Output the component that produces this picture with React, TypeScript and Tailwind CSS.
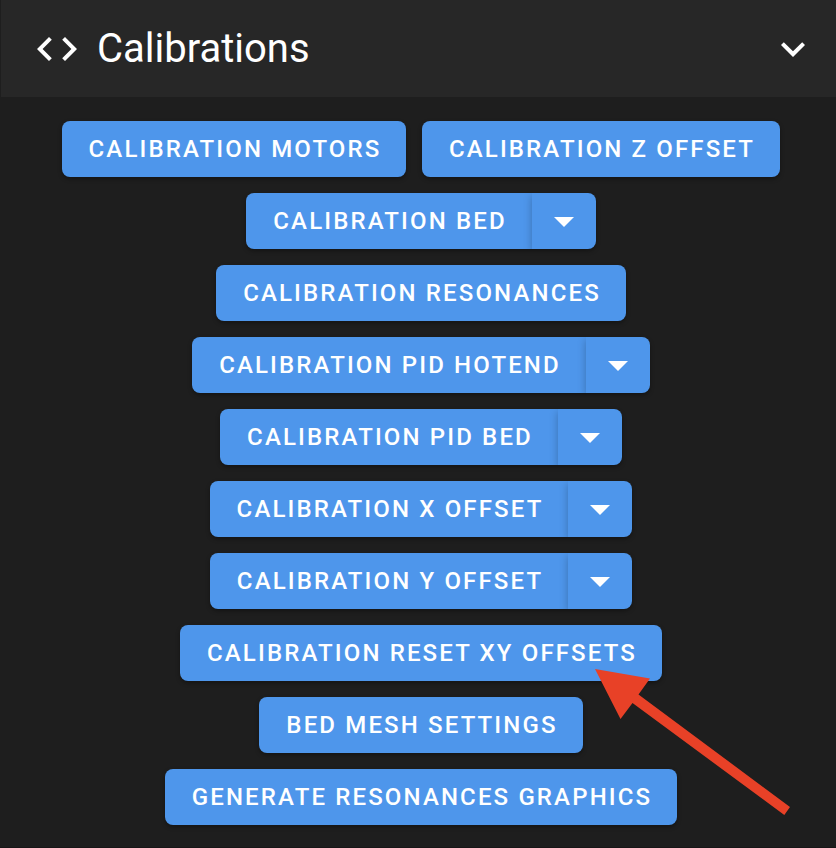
import React from "react";

type Item = { label: string; width: string; menu?: boolean };

const rows: Item[][] = [
  [
    { label: "Calibration Motors", width: "w-[344px]" },
    { label: "Calibration Z Offset", width: "w-[358px]" },
  ],
  [{ label: "Calibration Bed", width: "w-[286px]", menu: true }],
  [{ label: "Calibration Resonances", width: "w-[410px]" }],
  [{ label: "Calibration PID Hotend", width: "w-[394px]", menu: true }],
  [{ label: "Calibration PID Bed", width: "w-[338px]", menu: true }],
  [{ label: "Calibration X Offset", width: "w-[358px]", menu: true }],
  [{ label: "Calibration Y Offset", width: "w-[358px]", menu: true }],
  [{ label: "Calibration Reset XY Offsets", width: "w-[482px]" }],
  [{ label: "Bed Mesh Settings", width: "w-[324px]" }],
  [{ label: "Generate Resonances Graphics", width: "w-[512px]" }],
];

function MacroButton({ label, width, menu }: Item) {
  return (
    <div className="flex h-14 overflow-hidden rounded-lg bg-[#4e96eb] shadow-[0_2px_4px_rgba(0,0,0,0.35)]">
      <button
        className={`${width} h-14 whitespace-nowrap pl-[2px] text-center text-[24px] font-medium uppercase leading-14 tracking-[2.14px]`}
      >
        {label}
      </button>
      {menu && (
        <button className="flex h-14 w-16 items-center justify-center shadow-[0_3px_8px_rgba(0,0,0,0.25)]">
          <svg width="48" height="48" viewBox="0 0 24 24" fill="currentColor">
            <path d="M7 10l5 5 5-5z" />
          </svg>
        </button>
      )}
    </div>
  );
}

export default function App() {
  return (
    <main className="relative h-[848px] w-[836px] overflow-hidden border-b border-[#181617] bg-[#1e1e1e] font-['Roboto',sans-serif] text-white antialiased">
      <header className="flex h-[97px] items-center border-l border-[#1e1e1e] bg-[#272727] pl-8 pr-[19px]">
        <svg width="48" height="48" viewBox="0 0 24 24" fill="currentColor">
          <path d="M14.6 16.6l4.6-4.6-4.6-4.6L16 6l6 6-6 6-1.4-1.4m-5.2 0L4.8 12l4.6-4.6L8 6l-6 6 6 6 1.4-1.4z" />
        </svg>
        <h1 className="ml-4 text-[40px] font-normal">Calibrations</h1>
        <svg className="ml-auto" width="48" height="48" viewBox="0 0 24 24" fill="currentColor">
          <path d="M7.41 8.58L12 13.17l4.59-4.59L18 10l-6 6-6-6 1.41-1.42z" />
        </svg>
      </header>
      <section className="flex flex-col items-center gap-4 pl-[6px] pt-6">
        {rows.map((row, i) => (
          <div key={i} className="flex gap-4">
            {row.map((item) => (
              <MacroButton key={item.label} {...item} />
            ))}
          </div>
        ))}
      </section>
      <svg className="pointer-events-none absolute left-0 top-0" width="836" height="848" viewBox="0 0 836 848">
        <path d="M595 669L650 678.5L638.5 694.5L790 807L784.3 815L632.5 703L620.5 719Z" fill="#e84127" />
      </svg>
    </main>
  );
}
